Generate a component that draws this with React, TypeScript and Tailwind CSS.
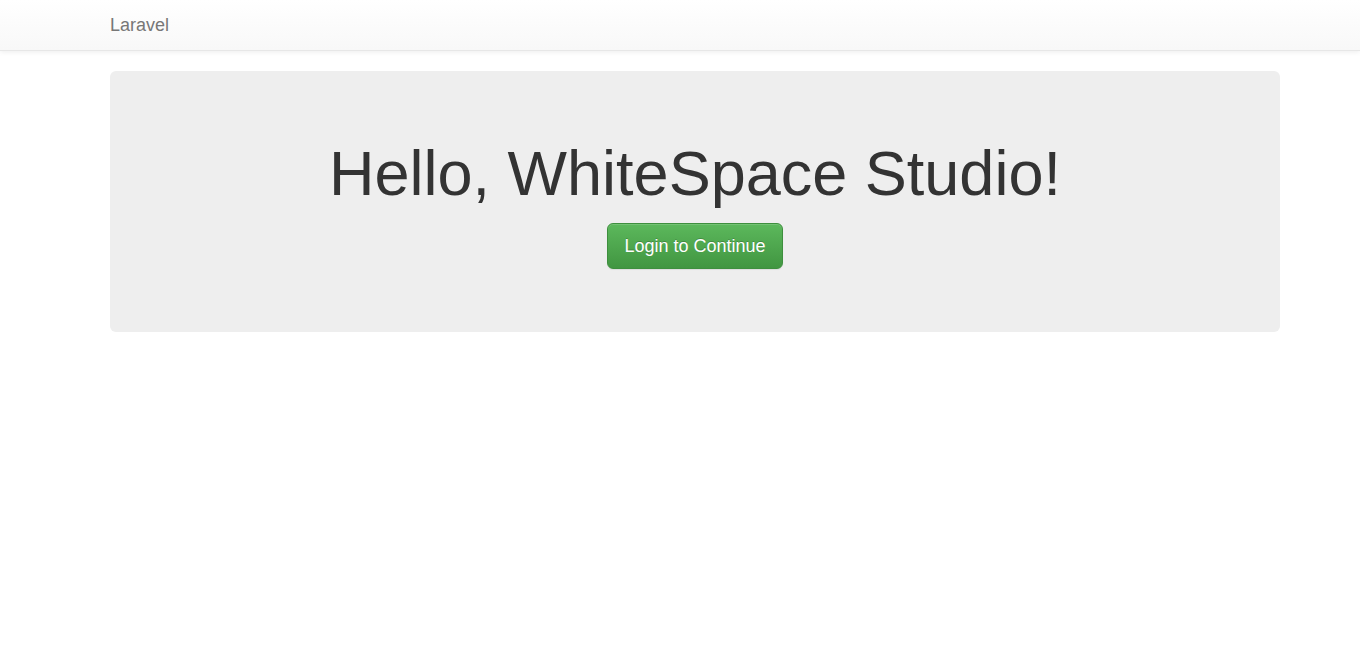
export default function App() {
  return (
    <div className="min-h-screen overflow-hidden bg-white font-['Liberation_Sans',Arial,sans-serif] text-[14px] text-[#333]">
      {/* Navbar */}
      <nav className="h-[51px] border-b border-[#e7e7e7] bg-gradient-to-b from-white to-[#f8f8f8] shadow-[inset_0_1px_0_rgba(255,255,255,0.15),0_1px_5px_rgba(0,0,0,0.075)]">
        <div className="mx-auto w-[1170px] px-[15px]">
          <a href="#" className="block h-[50px] py-[15px] text-[18px] leading-[20px] text-[#777]">
            Laravel
          </a>
        </div>
      </nav>

      {/* Jumbotron */}
      <div className="mx-auto mt-[20px] w-[1170px] pl-[15px]">
        <div className="w-[1170px] rounded-[6px] bg-[#eee] px-[60px] pt-[48px] pb-[48px] text-center">
          <h1 className="mt-[20px] mb-[10px] text-[63px] leading-[1.1] font-normal text-[#333]">
            Hello, WhiteSpace Studio!
          </h1>
          <div className="pt-[5px] pb-[15px]">
            <a
              href="#"
              className="inline-block rounded-[6px] border border-[#3e8f3e] bg-gradient-to-b from-[#5cb85c] to-[#419641] px-[16px] py-[10px] text-[18px] leading-[24px] text-white [text-shadow:0_-1px_0_rgba(0,0,0,0.2)] shadow-[inset_0_1px_0_rgba(255,255,255,0.15),0_1px_1px_rgba(0,0,0,0.075)]"
            >
              Login to Continue
            </a>
          </div>
        </div>
      </div>
    </div>
  )
}
